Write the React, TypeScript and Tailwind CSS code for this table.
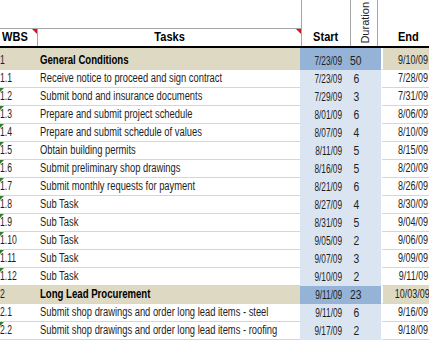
import React from "react";

type Row = {
  wbs: string;
  task: string;
  start: string;
  dur: string;
  end: string;
  summary?: boolean;
  flag?: boolean;
};

const rows: Row[] = [
  { wbs: "1", task: "General Conditions", start: "7/23/09", dur: "50", end: "9/10/09", summary: true },
  { wbs: "1.1", task: "Receive notice to proceed and sign contract", start: "7/23/09", dur: "6", end: "7/28/09" },
  { wbs: "1.2", task: "Submit bond and insurance documents", start: "7/29/09", dur: "3", end: "7/31/09", flag: true },
  { wbs: "1.3", task: "Prepare and submit project schedule", start: "8/01/09", dur: "6", end: "8/06/09", flag: true },
  { wbs: "1.4", task: "Prepare and submit schedule of values", start: "8/07/09", dur: "4", end: "8/10/09", flag: true },
  { wbs: "1.5", task: "Obtain building permits", start: "8/11/09", dur: "5", end: "8/15/09", flag: true },
  { wbs: "1.6", task: "Submit preliminary shop drawings", start: "8/16/09", dur: "5", end: "8/20/09", flag: true },
  { wbs: "1.7", task: "Submit monthly requests for payment", start: "8/21/09", dur: "6", end: "8/26/09", flag: true },
  { wbs: "1.8", task: "Sub Task", start: "8/27/09", dur: "4", end: "8/30/09", flag: true },
  { wbs: "1.9", task: "Sub Task", start: "8/31/09", dur: "5", end: "9/04/09", flag: true },
  { wbs: "1.10", task: "Sub Task", start: "9/05/09", dur: "2", end: "9/06/09", flag: true },
  { wbs: "1.11", task: "Sub Task", start: "9/07/09", dur: "3", end: "9/09/09", flag: true },
  { wbs: "1.12", task: "Sub Task", start: "9/10/09", dur: "2", end: "9/11/09", flag: true },
  { wbs: "2", task: "Long Lead Procurement", start: "9/11/09", dur: "23", end: "10/03/09", summary: true },
  { wbs: "2.1", task: "Submit shop drawings and order long lead items - steel", start: "9/11/09", dur: "6", end: "9/16/09" },
  { wbs: "2.2", task: "Submit shop drawings and order long lead items - roofing", start: "9/17/09", dur: "2", end: "9/18/09", flag: true },
];

function RedMark() {
  return (
    <span className="absolute right-0 top-0 h-0 w-0 border-l-[5px] border-t-[5px] border-l-transparent border-t-[#d01818]" />
  );
}

function GreenMark() {
  return (
    <span className="absolute left-0 top-0 h-0 w-0 border-r-[4px] border-t-[4px] border-r-transparent border-t-[#2f7d2f]" />
  );
}

function DataRow({ r, first }: { r: Row; first: boolean }) {
  const h = first ? "h-[22px]" : "h-[18px]";
  const rowBg = r.summary ? "bg-[#ddd9c3]" : "bg-white";
  const blue = r.summary ? "bg-[#95b3d7]" : "bg-[#dbe5f1]";
  return (
    <div className={`grid grid-cols-[38px_262px_47px_34px_1fr] text-[12px] leading-[14px] ${h}`}>
      <div className={`relative flex items-end border-b border-[#d6d6d6] pb-[2px] ${rowBg} text-[#1e1e1e]`}>
        {r.flag && <GreenMark />}
        <span className="inline-block origin-left scale-x-[0.72] whitespace-nowrap">{r.wbs}</span>
      </div>
      <div className={`flex items-end overflow-hidden border-b border-[#d6d6d6] pb-[2px] pl-[2px] ${rowBg}`}>
        {r.summary ? (
          <span className="inline-block origin-left scale-x-[0.8] whitespace-nowrap font-bold text-black">{r.task}</span>
        ) : (
          <span className="inline-block origin-left scale-x-[0.78] whitespace-nowrap text-[#1e1e1e]">{r.task}</span>
        )}
      </div>
      <div className={`flex items-end justify-end pb-[2px] pr-[5px] ${blue} text-[#1e1e1e]`}>
        <span className="inline-block origin-right scale-x-[0.69] whitespace-nowrap">{r.start}</span>
      </div>
      <div className={`flex items-end justify-center pb-[2px] pr-[16px] ${blue} text-[#1e1e1e]`}>
        <span className="inline-block origin-center scale-x-[0.86]">{r.dur}</span>
      </div>
      <div className={`flex items-end justify-end border-b border-l-2 border-b-[#d6d6d6] border-l-white pb-[2px] pr-[1px] ${rowBg} text-[#1e1e1e]`}>
        <span className="inline-block origin-right scale-x-[0.75] whitespace-nowrap">{r.end}</span>
      </div>
    </div>
  );
}

export default function App() {
  return (
    <div
      className="h-[340px] w-[429px] overflow-hidden bg-white text-[11px] leading-[13px]"
      style={{ fontFamily: '"Liberation Sans", Arial, sans-serif' }}
    >
      <div className="grid h-[48px] grid-cols-[38px_263px_49px_27px_1fr] border-b-2 border-black">
        <div className="flex flex-col justify-end">
          <div className="relative flex h-[18px] items-center border-r border-t border-[#a6a6a6] pl-[2px] text-[12px] font-bold text-black">
            <RedMark />
            <span className="inline-block origin-left scale-x-[0.92]">WBS</span>
          </div>
        </div>
        <div className="flex flex-col justify-end">
          <div className="relative flex h-[18px] items-center justify-center border-t border-[#a6a6a6] text-[12px] font-bold text-black">
            <RedMark />
            <span className="inline-block scale-x-[0.92]">Tasks</span>
          </div>
        </div>
        <div className="flex items-end justify-center border-l border-[#a6a6a6] pb-[2px] text-[12px] font-bold text-black">
          <span className="inline-block scale-x-[0.92]">Start</span>
        </div>
        <div className="flex items-end justify-center border-l border-[#a6a6a6] pb-[2px] pl-[2px]">
          <span className="rotate-180 text-[#1e1e1e] [writing-mode:vertical-rl]">Duration</span>
        </div>
        <div className="flex items-end justify-center border-l border-[#a6a6a6] pb-[2px] pl-[10px] text-[12px] font-bold text-black">
          <span className="inline-block scale-x-[0.92]">End</span>
        </div>
      </div>
      {rows.map((r, i) => (
        <DataRow key={r.wbs} r={r} first={i === 0} />
      ))}
    </div>
  );
}
